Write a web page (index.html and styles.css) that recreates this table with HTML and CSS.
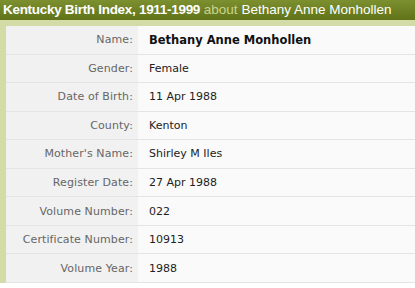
FILE: index.html
```html
<!DOCTYPE html>
<html>
<head>
<meta charset="utf-8">
<link rel="stylesheet" href="styles.css">
</head>
<body>
<div class="panel">
  <div class="title"><span class="db">Kentucky Birth Index, 1911-1999</span> <span class="about">about</span> <span class="person">Bethany Anne Monhollen</span></div>
  <div class="body">
    <div class="rows">
      <div class="row"><div class="lbl">Name:</div><div class="val strong">Bethany Anne Monhollen</div></div>
      <div class="row"><div class="lbl">Gender:</div><div class="val">Female</div></div>
      <div class="row"><div class="lbl">Date of Birth:</div><div class="val">11 Apr 1988</div></div>
      <div class="row"><div class="lbl">County:</div><div class="val">Kenton</div></div>
      <div class="row"><div class="lbl">Mother's Name:</div><div class="val">Shirley M Iles</div></div>
      <div class="row"><div class="lbl">Register Date:</div><div class="val">27 Apr 1988</div></div>
      <div class="row"><div class="lbl">Volume Number:</div><div class="val">022</div></div>
      <div class="row"><div class="lbl">Certificate Number:</div><div class="val">10913</div></div>
      <div class="row"><div class="lbl">Volume Year:</div><div class="val">1988</div></div>
    </div>
  </div>
</div>
</body>
</html>
```
FILE: styles.css
```css
html, body { margin: 0; padding: 0; background: #fff; }
body { font-family: "DejaVu Sans", Verdana, sans-serif; }
.panel { width: 415px; }
.title {
  height: 20px;
  line-height: 20px;
  padding-left: 3px;
  background: linear-gradient(#7d9030, #5f7218);
  color: #fff;
  font-family: "Liberation Sans", Arial, sans-serif;
  font-size: 13.5px;
  white-space: nowrap;
  overflow: hidden;
}
.title .db { font-weight: bold; letter-spacing: -0.3px; }
.title .about { color: #c9d58e; }
.body {
  border-top: 6px solid #d3dba6;
  border-left: 6px solid #d3dba6;
}
.rows { display: flex; flex-direction: column; }
.row {
  display: grid;
  grid-template-columns: 132px 1fr;
  height: 28.55px;
  border-bottom: 1px solid #e4e4e4;
  box-sizing: border-box;
  font-size: 11px;
  align-items: stretch;
}
.lbl {
  background: #f1f1f1;
  color: #666;
  text-align: right;
  padding-right: 5px;
  display: flex;
  align-items: center;
  justify-content: flex-end;
  letter-spacing: 0.1px;
}
.val {
  background: #fafafa;
  color: #222;
  padding-left: 11px;
  display: flex;
  align-items: center;
}
.val.strong { font-weight: bold; color: #111; font-size: 11.5px; }
```
